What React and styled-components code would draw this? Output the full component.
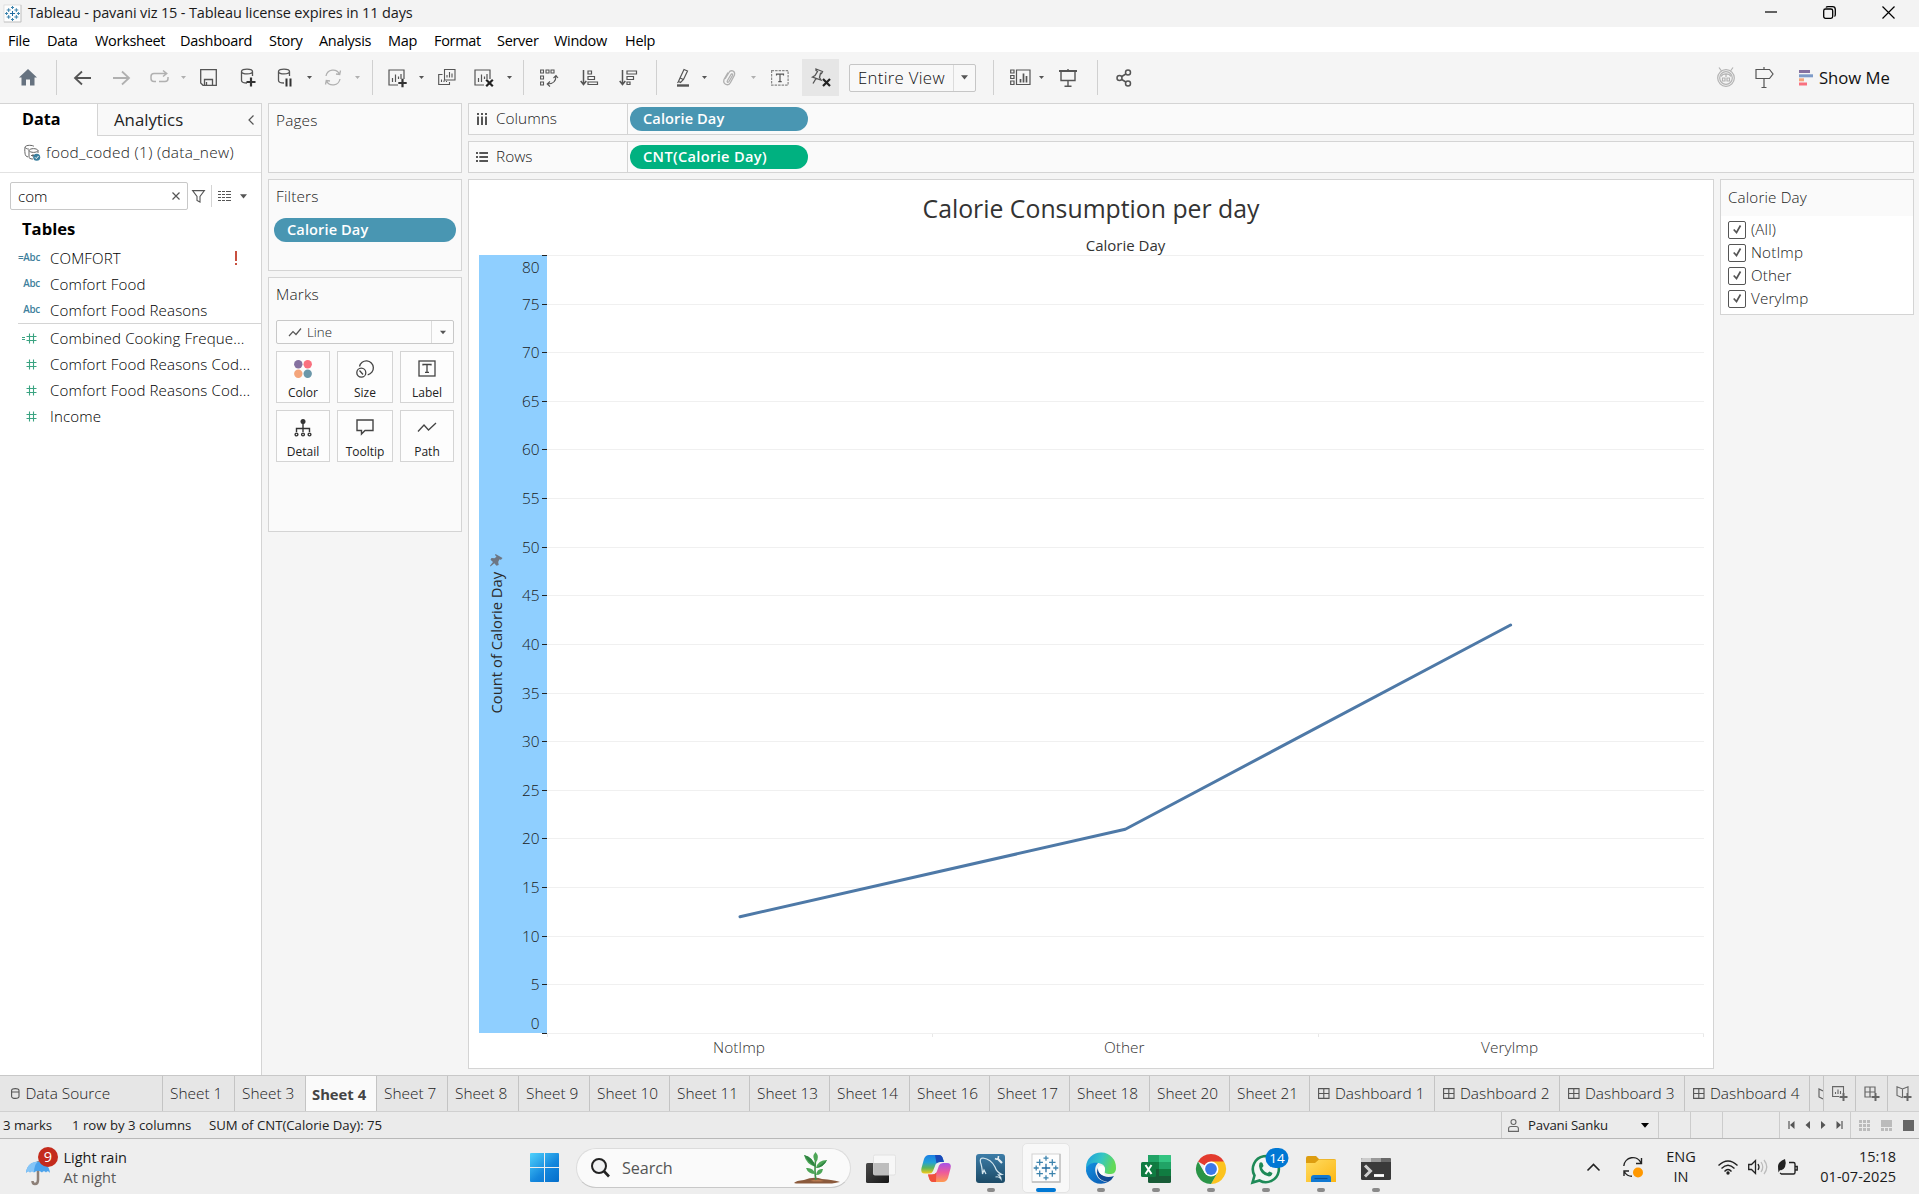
import React from "react";
import styled, { createGlobalStyle } from "styled-components";

const UI = `"Open Sans", "Noto Sans", "Liberation Sans", sans-serif`;

const Global = createGlobalStyle`
  *, *::before, *::after { box-sizing: border-box; }
  html, body { margin: 0; padding: 0; }
  body { font-family: ${UI}; overflow: hidden; background: #f5f5f5; }
  svg { display: block; flex: none; overflow: visible; }
`;

const Window = styled.div`
  width: 1919px;
  height: 1194px;
  display: flex;
  flex-direction: column;
  background: #f5f5f5;
  color: #333;
  font-size: 15px;
  white-space: nowrap;
`;

/* ---------- title bar and menu ---------- */
const TitleBar = styled.header`
  height: 27px;
  display: flex;
  align-items: center;
  padding: 0 24px 0 4px;
  background: #f3f3f3;
  color: #1a1a1a;
  font-size: 14.5px;
  letter-spacing: -0.14px;
  line-height: 26px;
`;
const TitleText = styled.span`
  flex: 1;
  margin-left: 7px;
  padding-bottom: 2px;
`;
const WindowButtons = styled.div`
  display: flex;
  align-items: center;
  gap: 46px;
  padding-bottom: 3px;
`;
const MenuBar = styled.nav`
  height: 25px;
  flex: none;
  display: flex;
  background: #fff;
  color: #000;
  font-size: 14.5px;
  line-height: 27px;
  letter-spacing: -0.3px;
`;
const MenuItem = styled.span`
  width: ${(p) => p.$w}px;
  padding-left: 8px;
`;

/* ---------- toolbar ---------- */
const Toolbar = styled.div`
  height: 51px;
  flex: none;
  display: flex;
  align-items: center;
  padding-right: 29px;
`;
const Tool = styled.span`
  width: ${(p) => p.$w || 24}px;
  height: ${(p) => (p.$active ? 37 : 26)}px;
  flex: none;
  margin-left: ${(p) => p.$ml}px;
  display: flex;
  align-items: center;
  justify-content: center;
  background: ${(p) => (p.$active ? "#e6e6e6" : "transparent")};
`;
const Divider = styled.i`
  width: 1px;
  height: 35px;
  flex: none;
  margin-left: ${(p) => p.$ml}px;
  background: #d0d0d0;
`;
const Spacer = styled.span`
  flex: 1;
`;
const FitBox = styled.div`
  width: 127px;
  height: 28px;
  margin-left: 10px;
  display: flex;
  border: 1px solid #c6c6c6;
  border-radius: 2px;
  background: #f8f8f8;
  color: #111;
  font-size: 16.8px;
  line-height: 26px;
`;
const FitText = styled.span`
  flex: 1;
  padding-left: 8px;
  font-weight: 300;
  letter-spacing: 0.3px;
`;
const DropCell = styled.span`
  width: ${(p) => p.$w}px;
  display: flex;
  align-items: center;
  justify-content: center;
  border-left: 1px solid #dcdcdc;
`;
const ShowMe = styled.span`
  display: flex;
  align-items: center;
  gap: 6px;
  margin-left: 22px;
  color: #111;
  font-size: 16.7px;
  line-height: 24px;
`;

/* ---------- work area ---------- */
const Work = styled.main`
  height: 972px;
  flex: none;
  display: flex;
`;

const DataPane = styled.aside`
  width: 262px;
  flex: none;
  border-top: 1px solid #d4d4d4;
  border-right: 1px solid #d4d4d4;
  background: #fff;
  color: #000;
  font-weight: 300;
`;
const PaneTabs = styled.div`
  display: flex;
  height: 32px;
`;
const DataTab = styled.div`
  width: 97px;
  padding-left: 22px;
  font-size: 16.2px;
  font-weight: 700;
  line-height: 30px;
`;
const AnalyticsTab = styled.div`
  flex: 1;
  display: flex;
  align-items: center;
  justify-content: space-between;
  padding: 0 7px 0 16px;
  border-left: 1px solid #d4d4d4;
  border-bottom: 1px solid #d4d4d4;
  background: #f9f9f9;
  font-size: 16.8px;
  font-weight: 400;
  line-height: 30px;
  color: #1e1e1e;
`;
const SourceRow = styled.div`
  height: 37px;
  display: flex;
  align-items: center;
  gap: 6px;
  padding: 0 0 3px 24px;
  border-bottom: 1px solid #e2e2e2;
  font-size: 15.4px;
  letter-spacing: 0.3px;
  color: #1a1a1a;
`;
const SearchRow = styled.div`
  display: flex;
  align-items: center;
  padding: 9px 0 0 10px;
  height: 37px;
`;
const SearchInput = styled.div`
  width: 178px;
  height: 28px;
  flex: none;
  margin-right: 4px;
  display: flex;
  align-items: center;
  justify-content: space-between;
  padding: 0 7px 1px 7px;
  border: 1px solid #c8c8c8;
  border-radius: 2px;
  font-size: 15.2px;
`;
const ThinLine = styled.i`
  width: 1px;
  height: 22px;
  flex: none;
  margin: 0 6px;
  background: #d4d4d4;
`;
const TablesHead = styled.div`
  height: 35px;
  padding-left: 22px;
  font-size: 16.6px;
  font-weight: 700;
  line-height: 38px;
`;
const FieldRow = styled.div`
  height: 26px;
  display: flex;
  align-items: center;
  font-size: 15.1px;
  letter-spacing: 0.12px;
  line-height: 26px;
`;
const FieldType = styled.span`
  width: 40px;
  height: 26px;
  flex: none;
  margin-right: 10px;
  padding-right: ${(p) => (p.$measure ? 3 : 0)}px;
  display: flex;
  align-items: center;
  justify-content: flex-end;
  color: #3e7f9c;
  font-size: 9.8px;
  font-weight: 600;
  letter-spacing: -0.25px;
`;
const FieldName = styled.span`
  flex: 1;
`;
const Warning = styled.span`
  width: 2px;
  height: 14px;
  margin-right: 24px;
  border-top: 10px solid #c8503f;
  border-bottom: 2px solid #c8503f;
`;
const FieldSplit = styled.hr`
  height: 1px;
  margin: 0 0 1px 18px;
  border: 0;
  background: #d4d4d4;
`;

const Cards = styled.section`
  width: 194px;
  flex: none;
  margin-left: 6px;
  display: flex;
  flex-direction: column;
  gap: 6px;
`;
const Card = styled.div`
  height: ${(p) => p.$h}px;
  border: 1px solid #d4d4d4;
  background: #fafafa;
`;
const CardTitle = styled.div`
  height: 31px;
  padding: 4px 0 0 7px;
  font-size: 15.4px;
  line-height: 26px;
  font-weight: 300;
  letter-spacing: 0.15px;
  color: #1a1a1a;
`;
const Pill = styled.div`
  width: ${(p) => p.$w}px;
  height: 24px;
  margin: ${(p) => p.$m || "0"};
  padding-left: 13px;
  border-radius: 12px;
  background: ${(p) => (p.$green ? "#00b180" : "#4996b2")};
  color: #fff;
  font-size: 14.6px;
  font-weight: 600;
  letter-spacing: ${(p) => (p.$green ? 0.35 : 0.1)}px;
  line-height: 23px;
`;
const MarkSelect = styled.div`
  width: 178px;
  height: 24px;
  margin: 11px 0 7px 7px;
  display: flex;
  align-items: stretch;
  border: 1px solid #c8c8c8;
  border-radius: 2px;
  background: #fcfcfc;
  color: #1a1a1a;
  font-size: 13.3px;
  line-height: 23px;
  font-weight: 300;
`;
const MarkName = styled.span`
  flex: 1;
  display: flex;
  align-items: center;
  gap: 6px;
  padding-left: 12px;
`;
const MarkGrid = styled.div`
  display: grid;
  grid-template-columns: 54px 56px 54px;
  grid-auto-rows: 52px;
  gap: 7px;
  margin-left: 7px;
`;
const MarkButton = styled.div`
  display: flex;
  flex-direction: column;
  align-items: center;
  padding-top: 8px;
  border: 1px solid #d4d4d4;
  background: #fdfdfd;
  color: #222;
  font-size: 12px;
  line-height: 17px;
  gap: 6px;
`;

const Stage = styled.section`
  width: 1446px;
  flex: none;
  margin-left: 6px;
  display: flex;
  flex-direction: column;
  gap: 6px;
`;
const Shelf = styled.div`
  height: 32px;
  flex: none;
  display: flex;
  align-items: center;
  border: 1px solid #d4d4d4;
  background: #fafafa;
`;
const ShelfName = styled.div`
  width: 159px;
  height: 30px;
  display: flex;
  align-items: center;
  gap: 8px;
  padding-left: 7px;
  border-right: 1px solid #d4d4d4;
  font-size: 15.4px;
  line-height: 30px;
  font-weight: 300;
  color: #1a1a1a;
`;
const StageBody = styled.div`
  display: flex;
  align-items: flex-start;
  gap: 6px;
`;
const View = styled.div`
  width: 1246px;
  height: 890px;
  border: 1px solid #d4d4d4;
  background: #fff;
`;
const ViewTitle = styled.h1`
  margin: 0;
  height: 54px;
  font-size: 24.8px;
  font-weight: 400;
  line-height: 56px;
  text-align: center;
  color: #333;
`;
const FieldLabel = styled.div`
  height: 21px;
  padding-left: 69px;
  font-size: 15px;
  line-height: 22px;
  text-align: center;
  color: #333;
`;
const FilterCard = styled.div`
  width: 194px;
  height: 136px;
  border: 1px solid #d4d4d4;
  background: #fff;
  font-size: 15.2px;
  letter-spacing: 0.15px;
  font-weight: 300;
  color: #1a1a1a;
`;
const FilterHead = styled.div`
  height: 36px;
  padding-left: 7px;
  margin-bottom: 2px;
  background: #fafafa;
  line-height: 35px;
`;
const FilterItem = styled.div`
  height: 23px;
  display: flex;
  align-items: center;
  gap: 5px;
  padding-left: 7px;
  line-height: 23px;
`;
const Check = styled.span`
  width: 18px;
  height: 18px;
  display: flex;
  align-items: center;
  justify-content: center;
  border: 1px solid #555;
  border-radius: 2px;
`;

/* ---------- sheet tabs and status ---------- */
const SheetTabs = styled.div`
  height: 37px;
  flex: none;
  display: flex;
  border-top: 1px solid #c8c8c8;
  border-bottom: 1px solid #d0d0d0;
  background: #e6e6e6;
  font-size: 15.4px;
  font-weight: 300;
  color: #222;
`;
const SheetTab = styled.div`
  width: ${(p) => p.$w}px;
  flex: none;
  overflow: hidden;
  display: flex;
  align-items: center;
  gap: ${(p) => p.$gap || 5.5}px;
  justify-content: ${(p) => (p.$center ? "center" : "flex-start")};
  padding-left: ${(p) => (p.$center ? 0 : p.$pl || 7)}px;
  border-left: 1px solid ${(p) => (p.$first ? "transparent" : "#c4c4c4")};
  background: ${(p) => (p.$active ? "#fafafa" : "transparent")};
  font-weight: ${(p) => (p.$active ? 700 : "inherit")};
  font-size: ${(p) => (p.$active ? "14.8px" : "inherit")};
  color: ${(p) => (p.$active ? "#444" : "inherit")};
  line-height: ${(p) => (p.$active ? 34 : 36)}px;
`;
const StatusBar = styled.div`
  height: 27px;
  flex: none;
  display: flex;
  align-items: stretch;
  border-bottom: 1px solid #b8b8b8;
  background: #ebebeb;
  font-size: 13.2px;
  line-height: 27px;
  color: #222;
`;
const StatusText = styled.span`
  width: ${(p) => p.$w}px;
  padding-left: 3px;
`;
const StatusCell = styled.div`
  width: ${(p) => p.$w}px;
  display: flex;
  align-items: center;
  gap: ${(p) => p.$gap || 0}px;
  padding-left: ${(p) => p.$pl || 0}px;
  border-left: 1px solid #ccc;
`;
const UserName = styled.span`
  width: 104px;
  letter-spacing: -0.15px;
`;

/* ---------- taskbar ---------- */
const Taskbar = styled.footer`
  height: 55px;
  flex: none;
  display: flex;
  align-items: center;
  padding-top: 1px;
  background: #eeeeee;
  color: #1a1a1a;
  font-size: 14.5px;
`;
const Weather = styled.div`
  width: 530px;
  height: 54px;
  padding: 1px 0 0 26px;
  display: flex;
  align-items: center;
  gap: 4.5px;
`;
const TwoLines = styled.div`
  width: ${(p) => p.$w || "auto"};
  display: flex;
  flex-direction: column;
  align-items: ${(p) => p.$align || "flex-start"};
  line-height: 20px;
`;
const Muted = styled.span`
  color: #5a5a5a;
`;
const SearchBox = styled.div`
  width: 275px;
  height: 40px;
  margin: 2px 2px 0 17px;
  display: flex;
  align-items: center;
  padding: 0 10px 0 14px;
  border: 1px solid #dcdcdc;
  border-bottom-color: #c8c8c8;
  border-radius: 20px;
  background: #fafafa;
`;
const SearchHint = styled.span`
  flex: 1;
  margin-left: 12px;
  font-size: 16.2px;
  letter-spacing: -0.1px;
  color: #555;
`;
const AppSlot = styled.div`
  width: 55px;
  height: 54px;
  flex: none;
  display: flex;
  justify-content: center;
  padding-top: 3px;
`;
const AppTile = styled.div`
  width: 48px;
  height: 50px;
  display: flex;
  flex-direction: column;
  align-items: center;
  justify-content: space-between;
  padding-top: 10px;
  border-radius: 5px;
  border: 1px solid ${(p) => (p.$active ? "#e4e4e4" : "transparent")};
  background: ${(p) => (p.$active ? "#f8f8f8" : "transparent")};
`;
const RunMark = styled.i`
  width: ${(p) => (p.$active ? 20 : 8)}px;
  height: 4px;
  border-radius: 2px;
  background: ${(p) => (p.$active ? "#0078d4" : "#8a8a8a")};
`;
const Tray = styled.div`
  flex: 1;
  display: flex;
  align-items: center;
  justify-content: flex-end;
  padding-right: 23px;
`;
const TrayItem = styled.div`
  width: ${(p) => p.$w}px;
  display: flex;
  justify-content: center;
`;

/* ---------- drawings ---------- */
const Ic = ({ w = 18, h = w, c = "#555", sw = 1.2, children }) => (
  <svg width={w} height={h} viewBox={`0 0 ${w} ${h}`} fill="none" stroke={c} strokeWidth={sw}>
    {children}
  </svg>
);
const Caret = ({ c = "#555", w = 7 }) => (
  <svg width={w} height="5" viewBox="0 0 8 5"><path d="M0 0H8L4 4.8Z" fill={c} /></svg>
);
const SheetGlyph = () => <path d="M16 10V1H1V16H10M4.500 13V9M7.500 13V5.500M10.500 10V7.500M13 10V5" />;
const Plus = ({ x, y, r = 4 }) => <path d={`M${x - r} ${y}H${x + r}M${x} ${y - r}V${y + r}`} stroke="#333" strokeWidth="2.2" />;
const Cross = ({ x, y, r = 3 }) => <path d={`M${x - r} ${y - r}L${x + r} ${y + r}M${x + r} ${y - r}L${x - r} ${y + r}`} stroke="#222" strokeWidth="2.2" />;

const crosses = [
  [10, 10, 3], [10, 3, 1.8], [10, 17, 1.8], [3, 10, 1.8], [17, 10, 1.8],
  [5.500, 6, 2.300], [14.500, 6, 2.300], [5.500, 14, 2.300], [14.500, 14, 2.300],
];
const TableauMark = ({ size, sw }) => (
  <svg width={size} height={size} viewBox="0 0 20 20">
    <rect x="0" y="0" width="20" height="20" fill="#fdfdfd" stroke="#d2d2d2" strokeWidth=".7" />
    <path d="M20 0V20H0" fill="none" stroke="#bdbdbd" strokeWidth=".9" />
    {crosses.map(([x, y, r], i) => (
      <path key={i} d={`M${x - r} ${y}H${x + r}M${x} ${y - r}V${y + r}`} stroke={i === 0 ? "#1f6aa0" : "#3c83ad"} strokeWidth={sw} />
    ))}
  </svg>
);

const Home = () => <svg width="18" height="17" viewBox="0 0 18 17"><path d="M9 0L18 8.500H15.500V16.500H11V10.500H7V16.500H2.500V8.500H0Z" fill="#66727f" /></svg>;
const Arrow = ({ flip, c }) => <Ic w={17} h={16} c={c} sw={1.8}><path d={flip ? "M0 8H16M9 1.500L16 8L9 14.500" : "M17 8H1M8 1.500L1 8L8 14.500"} /></Ic>;
const Replay = () => <Ic w={19} h={16} c="#b0b0b0" sw={1.5}><path d="M6 11.500H4Q1 11.500 1 8.500V6.500Q1 3.500 4 3.500H16.500M13 .5L16.700 3.500L13 6.500M9 11.500H15Q18 11.500 18 8.500V7" /></Ic>;
const Save = () => <Ic w={17} h={17} sw={1.3}><path d="M.7 .7H16.300V16.300H3L.7 14ZM4.500 16V10.500H12.500V16M6.500 13V16" /></Ic>;
const Cylinder = ({ pause }) => (
  <Ic w={16} h={19} sw={1.3}>
    <path d="M7 15C4 15 1.500 14.500 1.500 12.500V3.500M12.500 3.500V8M1.500 3.500C1.500 .3 12.500 .3 12.500 3.500S1.500 6.700 1.500 3.500" />
    {pause ? <path d="M9.500 10.500V18.500M13.500 10.500V18.500" stroke="#333" strokeWidth="2" /> : <Plus x={11} y={14} r={4.500} />}
  </Ic>
);
const Refresh = () => <Ic w={18} h={17} c="#b0b0b0" sw={1.3}><path d="M2 7A7.200 7.200 0 0 1 15.500 5M16 10A7.200 7.200 0 0 1 2.500 12M16.500 1.500L15.700 5.500L12 5M1.500 15.500L2.300 11.500L6 12" /></Ic>;
const NewSheet = () => <Ic w={19} h={18}><SheetGlyph /><Plus x={14.500} y={14} r={4.200} /></Ic>;
const ClearSheet = () => <Ic w={20} h={18}><SheetGlyph /><Cross x={15.500} y={14} r={3.300} /></Ic>;
const Duplicate = () => <Ic w={18} h={18} sw={1.1}><path d="M6.500 .5H17V11H6.500ZM9 8.500V6M11.500 8.500V3M14 8.500V4.500M4.500 5.500H.7V15.500H11.500V13M3.500 13V10.500M6 13V11.500M8.500 13V12" /></Ic>;
const Swap = () => <Ic w={18} h={18} sw={1.1}><path d="M.6 1H3.500V4H.6ZM6 1H9V4H6ZM11 1H14V4H11ZM.6 7H3.500V10H.6ZM.6 13H3.500V16H.6ZM16 7C16 12 13 15 7.500 15M13.500 9L16 6.500L18 9M10 12.500L7.200 15L10 17.500" /></Ic>;
const Sort = ({ desc }) => (
  <Ic w={18} h={16} sw={1.2}>
    <path d="M3.500 0V14M.7 11L3.500 14.500L6.300 11" strokeWidth="1.5" />
    <path d={desc ? "M8 1H17.500V4H8ZM8 6.500H14.500V9.500H8ZM8 12H11V14.500H8Z" : "M8 1H11.500V4H8ZM8 6.500H14.500V9.500H8ZM8 12H17.500V14.500H8Z"} />
  </Ic>
);
const Highlighter = () => <Ic w={14} h={19}><path d="M4 10L8 1.500L11.500 3L7.500 11.500L4.500 14.500L2.500 13.500ZM4 10L7.500 11.500M1.500 15L2.500 13.500" /><path d="M1 17.500H13" strokeWidth="2.400" /></Ic>;
const Clip = () => <Ic w={14} h={17} c="#b0b0b0" sw={1.3}><path d="M3 10L7 3.500C8.500 .5 13.500 1.500 12.500 6L8.500 13.500C6.500 17.500 .5 15.500 2 10.500L6 3.500M5.500 11.500L9 5.500C10 4 11 5.500 10.500 6.500L7 12.500C6 14 4.500 13 5.500 11.500" /></Ic>;
const TextBox = () => <Ic w={18} h={16} c="#888"><rect x=".6" y=".6" width="16.500" height="14.500" strokeDasharray="2.500 1" /><path d="M5.500 5.500V4.200H12.500V5.500M9 4.200V11.500M7.300 11.700H10.700" stroke="#555" /></Ic>;
const PinX = () => <Ic w={20} h={19} sw={1.3}><path d="M5 1L11.500 3.500L10.500 5.500L9.500 5.300L8.500 9.500L10 12L1.500 9L4 7.500L6.500 3.500L5 2.500ZM5 10.500L2 15.500" /><Cross x={15.500} y={14.500} r={3.500} /></Ic>;
const CardsIcon = () => <Ic w={21} h={17}><path d="M.7 1H4V4H.7ZM.7 6.500H4V9.500H.7ZM.7 12H4V15.500H.7ZM6.500 1H20V15.500H6.500Z" /><path d="M10.500 13.500V10M13.500 13.500V4.500M16.500 13.500V7" strokeWidth="1.7" /></Ic>;
const Present = () => <Ic w={18} h={18} sw={1.4}><path d="M0 2H18" strokeWidth="2" /><path d="M2 2.500V11.500H16V2.500M9 0V2M9 11.500V17M5.500 17.200H12.500" /></Ic>;
const Share = () => <Ic w={16} h={18} sw={1.5}><circle cx="3.500" cy="9" r="2.500" /><circle cx="12" cy="3.500" r="2.500" /><circle cx="12" cy="14.500" r="2.500" /><path d="M5.800 7.500L9.800 5M5.800 10.500L9.800 13" /></Ic>;
const Robot = () => <Ic w={20} h={21} c="#b3b3b3" sw={1.2}><circle cx="10" cy="11" r="8.300" /><circle cx="10" cy="11" r="6.300" /><path d="M3 .5L5.500 4M17 .5L14.500 4M5 9.500C7 6 13 6 15 9.500M6.500 11H9V14H6.500ZM11 11H13.500V14H11ZM10 7V10" /></Ic>;
const Sign = () => <Ic w={19} h={22} sw={1.2}><path d="M1 2.500H14.500L18 7L14.500 11.500H1ZM9 0V2.500M9 11.500V20.500M6.500 20.500H11.500" /></Ic>;

const SourceIcon = () => (
  <Ic w={16} h={16} c="#666" sw={1}>
    <path d="M2 11C.5 10 .7 2 1 2C2 -.3 9 0 10 1.500M1 2.500C2.500 4 4.500 4.200 5 4M5 5.500V12.500C6 14 8 14 9 14M5 5.500C6 3 13 3 14 5.500V8M5 5.500C6 8 13 8 14 5.500M7 10.500H10M8.500 9L10 10.500L8.500 12M2 11L4 12" />
    <circle cx="12.700" cy="12.300" r="3.500" fill="#3b7f9e" stroke="none" />
    <path d="M11 12.300L12.300 13.600L14.500 11" stroke="#fff" />
  </Ic>
);
const Hash = ({ calc }) => <Ic w={calc ? 15 : 11} h={11} c="#3aa381" sw={1.1}><g transform={calc ? "translate(4 0)" : undefined}><path d="M3.500 .5V10.500M7.500 .5V10.500M.5 3.500H10.500M.5 7.500H10.500" /></g>{calc && <path d="M0 4.500H3M0 6.500H3" />}</Ic>;

const marks = {
  Color: <Ic w={18} h={18}><g stroke="none"><circle cx="4.300" cy="4.300" r="4.200" fill="#8571a0" /><circle cx="13.700" cy="4.300" r="4.200" fill="#f9707f" /><circle cx="4.300" cy="13.700" r="4.200" fill="#f4a57b" /><circle cx="13.700" cy="13.700" r="4.200" fill="#6b97a9" /></g></Ic>,
  Size: <Ic w={18} h={18} c="#444" sw={1.3}><circle cx="5.300" cy="12.700" r="4.500" /><path d="M3.500 10.500L7 14.500M3.500 6.500A7 7 0 1 1 11.700 14.800" /></Ic>,
  Label: <Ic w={18} h={18} c="#444" sw={1.3}><rect x="1" y="1" width="16" height="15" /><path d="M5 5.500V4.500H13V5.500M9 4.500V12M7 12.300H11" /></Ic>,
  Detail: <Ic w={18} h={18} c="#333" sw={1.4}><circle cx="9" cy="2.500" r="2.500" fill="#333" stroke="none" /><path d="M9 4V13M2.500 13V9.500H15.500V13" /><circle cx="2.500" cy="15.500" r="1.400" /><circle cx="9" cy="15.500" r="1.400" /><circle cx="15.500" cy="15.500" r="1.400" /></Ic>,
  Tooltip: <Ic w={18} h={18} c="#444" sw={1.4}><path d="M1 1H17V11.500H9L5.500 15V11.500H1Z" /></Ic>,
  Path: <Ic w={18} h={18} c="#444" sw={1.3}><path d="M0 12.500L6 6L10.500 11L18 4" /></Ic>,
};

const GridIcon = () => <Ic w={12} h={11} c="#555" sw={1.1}><path d="M.6 .6H11V10.400H.6ZM5.800 .6V10.400M.6 5.500H11" /></Ic>;
const GridPlus = () => <Ic w={16} h={15} c="#666" sw={1.2}><path d="M11 7V1H1V11H7M6 1V11M1 6H11" /><path d="M7.500 11H15.500M11.500 7V15" strokeWidth="2" /></Ic>;
const SheetPlus = () => <Ic w={16} h={15} c="#666" sw={1.1}><path d="M11.500 7V.6H.6V10.500H7M3.500 8V6M6 8V3.500M8.500 8V5" /><path d="M7.500 11H15.500M11.500 7V15" strokeWidth="2" /></Ic>;
const StoryPlus = () => <Ic w={16} h={15} c="#666" sw={1.1}><path d="M12 7V.8L6.500 3L1 .8V9.500L6.500 11.700M6.500 3V11.700" /><path d="M7.500 11H15.500M11.500 7V15" strokeWidth="2" /></Ic>;

/* ---------- chart ---------- */
const ticks = Array.from({ length: 17 }, (_, i) => 80 - i * 5);
const yOf = (v) => 778.5 - v * 48.63 / 5;
const data = [["NotImp", 12], ["Other", 21], ["VeryImp", 42]];
const xOf = (i) => 271 + i * 385.3;
const labelShift = (v) => (v === 80 ? 11.5 : v === 0 ? -10.5 : 0);

const Chart = () => (
  <svg width="1244" height="812" viewBox="0 0 1244 812" fontFamily={UI} fontSize="15.4">
    <rect x="10" y="0" width="68" height="778" fill="#8fcfff" />
    {ticks.map((v) => {
      const y = Math.floor(yOf(v)) + 0.5;
      return (
        <g key={v}>
          <path d={`M78 ${y}H1235`} stroke="#f0f0f0" />
          <path d={`M73 ${y}H78`} stroke="#222" />
          <text x="70.500" y={y + 5.5 + labelShift(v)} textAnchor="end" fontWeight="300" fill="#1a1a1a">{v}</text>
        </g>
      );
    })}
    {[78.5, 463.500, 849.500, 1234.500].map((x) => <path key={x} d={`M${x} 779V782`} stroke="#e8e8e8" />)}
    <text transform="translate(33 458.500) rotate(-90)" fontSize="14.8" fill="#2a2a2a">Count of Calorie Day</text>
    <path d="M26.500 299L33.500 303L32 304.800L30.300 304.500L29.200 307L29.700 310L27.500 310.800L25.300 308.300L21.500 311.500L21 310.800L24 307L21.500 304.700L22.500 303L25.500 303.200L27.500 301.800L26 300Z" fill="#6d7683" />
    <polyline points={data.map(([, v], i) => `${xOf(i)},${yOf(v)}`).join(" ")} fill="none" stroke="#4e79a7" strokeWidth="3" strokeLinecap="round" strokeLinejoin="round" />
    {data.map(([n], i) => <text key={n} x={xOf(i) - 1} y="797.500" textAnchor="middle" fontWeight="300" fill="#333">{n}</text>)}
  </svg>
);

/* ---------- taskbar logos ---------- */
const WinLogo = () => (
  <svg width="29" height="29" viewBox="0 0 29 29">
    <defs><linearGradient id="win" gradientUnits="userSpaceOnUse" x1="0" y1="0" x2="26" y2="29"><stop offset="0" stopColor="#4fd2fc" /><stop offset=".6" stopColor="#1487dd" /><stop offset="1" stopColor="#0670cc" /></linearGradient></defs>
    <path d="M1 0H14V14H0V1Q0 0 1 0ZM15 0H28Q29 0 29 1V14H15ZM0 15H14V29H1Q0 29 0 28ZM15 15H29V28Q29 29 28 29H15Z" fill="url(#win)" />
  </svg>
);
const Umbrella = () => (
  <svg width="33" height="40" viewBox="0 0 33 40">
    <path d="M12 13V32Q12 36 9 36Q6.500 36 6.500 33" fill="none" stroke="#8d8078" strokeWidth="2.500" />
    <path d="M0 25C1 10 23 10 24 25Q22 22 20 24.500Q18 22 16 24.500Q12 21 8 24.500Q6 22 4 24.500Q2 22 0 25Z" fill="#4ba3ec" />
    <path d="M0 25C1 16 6 14 12 13.500Q8 17 8 24.500Q6 22 4 24.500Q2 22 0 25Z" fill="#85c5f7" />
    <circle cx="22" cy="9" r="10" fill="#c42b1c" />
    <text x="22" y="14" textAnchor="middle" fontSize="14.500" fill="#fff">9</text>
  </svg>
);
const Magnifier = () => <Ic w={19} h={20} c="#222" sw={2}><circle cx="8" cy="8" r="7" fill="#f0f1f2" /><path d="M12.800 13L18 18.500" strokeWidth="2.600" /></Ic>;
const Plant = () => (
  <svg width="46" height="32" viewBox="0 0 46 32">
    <path d="M0 31Q2 28.500 10 28Q20 24 28 27Q40 28 46 30Q40 31 38 31.500H2Z" fill="#8b5a3c" />
    <path d="M16 29Q22 26 30 29Q24 30 16 29Z" fill="#b9794f" />
    <path d="M22 28Q20 20 22 4" stroke="#3f8f48" strokeWidth="1.600" fill="none" />
    <path d="M22 10Q17 5 21.500 0Q26 5 22 10ZM21.500 15Q12 12 10 3Q19 5 21.500 15ZM22 16Q24 8 33 8Q30 15 22 16ZM21.500 22Q14 22 12 16Q19 15 21.500 22ZM22 23Q23 16 29 17Q28 23 22 23Z" fill="#4da657" />
    <path d="M21.500 15Q15 11 10 3Q19 5 21.500 15ZM22 16Q27 13 33 8Q30 15 22 16Z" fill="#2f8442" />
  </svg>
);
const TaskView = () => (
  <svg width="30" height="30" viewBox="0 0 30 30">
    <defs><linearGradient id="tv" x1="0" y1="0" x2="1" y2="1"><stop offset="0" stopColor="#4a4a4a" /><stop offset="1" stopColor="#161616" /></linearGradient></defs>
    <rect x="0" y="9" width="23" height="20" rx="1.500" fill="url(#tv)" />
    <rect x="7.500" y="1" width="22" height="20" rx="1.500" fill="#f7f7f7" stroke="#ddd" strokeWidth=".8" />
    <path d="M7.500 9H23V21H9Q7.500 21 7.500 19.500Z" fill="#bdbdbd" />
  </svg>
);
const Copilot = () => (
  <svg width="30" height="30" viewBox="0 0 30 30">
    <defs>
      <linearGradient id="cpa" x1="0" y1="0" x2="0" y2="1"><stop offset="0" stopColor="#1b7fe4" /><stop offset=".4" stopColor="#22a0d8" /><stop offset=".7" stopColor="#5db65b" /><stop offset="1" stopColor="#f6c916" /></linearGradient>
      <linearGradient id="cpb" x1="0" y1="0" x2="0" y2="1"><stop offset="0" stopColor="#a650e8" /><stop offset=".5" stopColor="#ee5a9a" /><stop offset="1" stopColor="#ff9b50" /></linearGradient>
    </defs>
    <path d="M8 1H18Q21 1 22 5L23 8H19Q15 8 14 12L12 17Q11 19.500 8 19.500H4Q-1 19.500 .5 14L3 5Q4.500 1 8 1Z" fill="url(#cpa)" />
    <path d="M14 1H18Q21 1 22 5L23 8H19Q16.500 8 15.500 9.500Z" fill="#1a49b8" />
    <path d="M22 28H12Q9 28 8 24L7 20.500H11Q15 20.500 16 17L18 11.500Q19 9 22 9H26Q31 9 29.500 14.500L27 24Q25.500 28 22 28Z" fill="url(#cpb)" />
    <path d="M15 28H12Q9 28 8 24L7 20.500H11Q14 20.500 15.300 18.500Z" fill="#f0503c" />
  </svg>
);
const MySql = () => (
  <svg width="29" height="30" viewBox="0 0 29 30">
    <defs><linearGradient id="my" x1="0" y1="0" x2="0" y2="1"><stop offset="0" stopColor="#3d7da8" /><stop offset="1" stopColor="#1c4a66" /></linearGradient></defs>
    <rect width="29" height="29" rx="3" fill="url(#my)" />
    <path d="M10 20L8 16L6.500 20Q6 12 4.500 8.500Q3.500 4 7 4Q15 5 19 13Q20.500 18 26 20.500L22.500 21Q25 23 25 25Q23 22 19.500 23" fill="none" stroke="#d5e6ee" strokeWidth="1.200" />
    <path d="M21.500 4.500L26 9" stroke="#e6eef2" strokeWidth="2.200" /><path d="M19 4.500Q22.500 6.500 22.500 2" stroke="#e6eef2" strokeWidth="1.600" fill="none" />
  </svg>
);
const Edge = () => (
  <svg width="30" height="30" viewBox="0 0 30 30">
    <defs>
      <linearGradient id="eg" x1="0" y1="0" x2="1" y2=".3"><stop offset="0" stopColor="#1a9be0" /><stop offset=".55" stopColor="#35c6c4" /><stop offset="1" stopColor="#62d957" /></linearGradient>
      <linearGradient id="eb" x1="0" y1="0" x2="1" y2="1"><stop offset="0" stopColor="#1390e0" /><stop offset="1" stopColor="#0b58b0" /></linearGradient>
    </defs>
    <path d="M0 13A15 15 0 0 1 30 14C30 19 27 20 24 20C20 20 18 19 19 17C20 11 15 9 11 9C6 9 1 11 0 17Z" fill="url(#eg)" />
    <path d="M0 17C0 10 7 8 12 9C9 12 8 17 11 22C13 26 18 28 22 28A15 15 0 0 1 0 17Z" fill="url(#eb)" />
    <path d="M12 14C9 20 13 27 22 28Q26 26 28 22Q22 24 18 22Q12 20 12 14Z" fill="#104a94" />
    <path d="M12 15Q13 11 17 12Q20 14 18.500 17.500Q17 20 20 22Q13 21 12 15Z" fill="#fff" />
  </svg>
);
const Excel = () => (
  <svg width="30" height="30" viewBox="0 0 30 30">
    <rect x="7" y="1" width="23" height="28" rx="1.500" fill="#185c37" />
    <path d="M7 1H18V8H7Z" fill="#21a366" /><path d="M18 1H29Q30 1 30 2V8H18Z" fill="#33c481" />
    <path d="M7 8H18V15H7Z" fill="#107c41" /><path d="M18 8H30V15H18Z" fill="#21a366" /><path d="M18 15H30V22H18Z" fill="#107c41" />
    <rect x="0" y="8" width="15" height="15" rx="1.500" fill="#0f7b41" />
    <path d="M4.500 11L10.500 20M10.500 11L4.500 20" stroke="#fff" strokeWidth="2" />
  </svg>
);
const Chrome = () => (
  <svg width="30" height="30" viewBox="0 0 30 30">
    <path d="M15 15L2 7.500A15 15 0 0 1 28 7.500Z" fill="#e33b2e" />
    <path d="M15 7.500H28A15 15 0 0 1 15 30L21.500 18.700Z" fill="#fcc31e" />
    <path d="M2 7.500L8.500 18.700Q15 24 21.500 18.700L15 30A15 15 0 0 1 2 7.500Z" fill="#2a9447" />
    <circle cx="15" cy="15" r="7.500" fill="#fff" /><circle cx="15" cy="15" r="5.900" fill="#3b78e7" />
  </svg>
);
const WhatsApp = () => (
  <svg width="30" height="30" viewBox="0 0 30 30">
    <path d="M1.500 28.500L3.500 21.500A13 13 0 1 1 8.500 26.500Z" fill="#f3f6f4" stroke="#1e8a57" strokeWidth="2.600" />
    <path d="M8.500 9Q10 7.500 11.500 9L12.500 12L11 14Q13 18 16.500 19L18.500 17.500L21.500 19Q21 22.500 18 22.500Q9 21 8 12Z" fill="#1e8a57" />
    <rect x="14.500" y="-6" width="23" height="20" rx="10" fill="#0078d4" />
    <text x="26" y="9" textAnchor="middle" fontSize="13.500" fill="#fff">14</text>
  </svg>
);
const Folder = () => (
  <svg width="30" height="30" viewBox="0 0 30 30">
    <defs><linearGradient id="fo" x1="0" y1="0" x2="1" y2="1"><stop offset="0" stopColor="#ffdc62" /><stop offset="1" stopColor="#fcb714" /></linearGradient></defs>
    <path d="M0 4Q0 2 2 2H10L13 5H28Q30 5 30 7V12H0Z" fill="#dd9d10" />
    <path d="M0 9H9L13 5.500H29Q30 5.500 30 7V28H0Z" fill="url(#fo)" />
    <path d="M5 28V24Q5 21 8 21H22Q25 21 25 24V28Z" fill="#1079d2" /><path d="M8.500 24.500H21.500" stroke="#0b4f92" strokeWidth="1.200" />
  </svg>
);
const Terminal = () => (
  <svg width="30" height="30" viewBox="0 0 30 30">
    <rect x="0" y="4" width="30" height="22" rx="1.500" fill="#3a3a3a" />
    <path d="M0 8V5.500Q0 4 1.500 4H10V8Z" fill="#ccc" /><path d="M10 4H20V8H10Z" fill="#999" /><path d="M20 4H28.500Q30 4 30 5.500V8H20Z" fill="#686868" />
    <path d="M4 11.500L9.500 17L4 22.500" stroke="#d0d0d0" strokeWidth="3" fill="none" /><path d="M13 21.500H23" stroke="#fff" strokeWidth="2.800" />
  </svg>
);
const TableauApp = () => <TableauMark size={28} sw={0.9} />;

const apps = [
  [TaskView], [Copilot], [MySql, true], [TableauApp, true, true],
  [Edge, true], [Excel, true], [Chrome, true], [WhatsApp, true], [Folder, true], [Terminal, true],
];

const menu = [["File", 39], ["Data", 48], ["Worksheet", 85], ["Dashboard", 89], ["Story", 50], ["Analysis", 69], ["Map", 46], ["Format", 63], ["Server", 57], ["Window", 71], ["Help", 60]];
const fields = [["=Abc", "COMFORT", true], ["Abc", "Comfort Food"], ["Abc", "Comfort Food Reasons"]];
const measures = [["Combined Cooking Freque...", true], ["Comfort Food Reasons Cod..."], ["Comfort Food Reasons Cod..."], ["Income"]];
const sheets = [[1, 72], [3, 71], [4, 71], [7, 71], [8, 71], [9, 71], [10, 80], [11, 80], [13, 80], [14, 80], [16, 80], [17, 80], [18, 80], [20, 80], [21, 80]];

export default function App() {
  return (
    <>
      <Global />
      <Window>
        <TitleBar>
          <TableauMark size={17} sw={1.2} />
          <TitleText>Tableau - pavani viz 15 - Tableau license expires in 11 days</TitleText>
          <WindowButtons>
            <Ic w={12} h={12} c="#000"><path d="M0 6H12" /></Ic>
            <Ic w={13} h={13} c="#000" sw={1.3}><rect x=".7" y="3" width="9" height="9.300" rx="1.800" /><path d="M3 1.500Q3.500 .7 5 .7H9.500Q12.300 .7 12.300 3.500V8.500Q12.300 10 11.500 10.500" /></Ic>
            <Ic w={13} h={13} c="#000"><path d="M.5 .5L12.500 12.500M12.500 .5L.5 12.500" /></Ic>
          </WindowButtons>
        </TitleBar>
        <MenuBar>{menu.map(([t, w]) => <MenuItem key={t} $w={w}>{t}</MenuItem>)}</MenuBar>

        <Toolbar>
          <Tool $ml={16}><Home /></Tool>
          <Divider $ml={16} />
          <Tool $ml={13}><Arrow c="#555" /></Tool>
          <Tool $ml={15}><Arrow flip c="#b0b0b0" /></Tool>
          <Tool $ml={14}><Replay /></Tool>
          <Tool $ml={8} $w={8}><Caret c="#b0b0b0" w={5} /></Tool>
          <Tool $ml={9}><Save /></Tool>
          <Tool $ml={16}><Cylinder /></Tool>
          <Tool $ml={13}><Cylinder pause /></Tool>
          <Tool $ml={8} $w={8}><Caret w={5} /></Tool>
          <Tool $ml={8}><Refresh /></Tool>
          <Tool $ml={8} $w={8}><Caret c="#b0b0b0" w={5} /></Tool>
          <Divider $ml={11} />
          <Tool $ml={12}><NewSheet /></Tool>
          <Tool $ml={8} $w={8}><Caret w={5} /></Tool>
          <Tool $ml={10}><Duplicate /></Tool>
          <Tool $ml={13}><ClearSheet /></Tool>
          <Tool $ml={9} $w={8}><Caret w={5} /></Tool>
          <Divider $ml={10} />
          <Tool $ml={13}><Swap /></Tool>
          <Tool $ml={16}><Sort /></Tool>
          <Tool $ml={15}><Sort desc /></Tool>
          <Divider $ml={16} />
          <Tool $ml={14}><Highlighter /></Tool>
          <Tool $ml={5} $w={8}><Caret w={5} /></Tool>
          <Tool $ml={9}><Clip /></Tool>
          <Tool $ml={8} $w={8}><Caret c="#b0b0b0" w={5} /></Tool>
          <Tool $ml={11}><TextBox /></Tool>
          <Tool $ml={10} $w={37} $active><PinX /></Tool>
          <FitBox><FitText>Entire View</FitText><DropCell $w={22}><Caret w={7} /></DropCell></FitBox>
          <Divider $ml={17} />
          <Tool $ml={14}><CardsIcon /></Tool>
          <Tool $ml={5} $w={8}><Caret w={5} /></Tool>
          <Tool $ml={11}><Present /></Tool>
          <Divider $ml={17} />
          <Tool $ml={14}><Share /></Tool>
          <Spacer />
          <Tool $ml={0}><Robot /></Tool>
          <Tool $ml={15}><Sign /></Tool>
          <ShowMe>
            <svg width="14" height="16" viewBox="0 0 14 16"><path d="M0 0H11V3H0Z" fill="#8571a0" /><path d="M0 4.300H14V7.300H0Z" fill="#7e9bc8" /><path d="M0 8.300H5V11.300H0Z" fill="#f4a57b" /><path d="M0 12.500H8V15.500H0Z" fill="#f9707f" /></svg>
            Show Me
          </ShowMe>
        </Toolbar>

        <Work>
          <DataPane>
            <PaneTabs>
              <DataTab>Data</DataTab>
              <AnalyticsTab>Analytics<Ic w={6} h={10}><path d="M5.500 .5L1 5L5.500 9.500" /></Ic></AnalyticsTab>
            </PaneTabs>
            <SourceRow><SourceIcon />food_coded (1) (data_new)</SourceRow>
            <SearchRow>
              <SearchInput>com<Ic w={8} h={8}><path d="M.5 .5L7.500 7.500M7.500 .5L.5 7.500" /></Ic></SearchInput>
              <Ic w={13} h={13} sw={1.1}><path d="M.6 .6H12.400L8 6.500V12L5 10.500V6.500Z" /></Ic>
              <ThinLine />
              <Ic w={13} h={10} sw={1.1}><path d="M0 .5H3M4 .5H7M8 .5H13M0 3.500H3M4 3.500H7M8 3.500H13M0 6.500H3M4 6.500H7M8 6.500H13M0 9.500H3M4 9.500H7M8 9.500H13" /></Ic>
              <Tool $ml={8} $w={8}><Caret w={7} /></Tool>
            </SearchRow>
            <TablesHead>Tables</TablesHead>
            {fields.map(([t, n, bad]) => (
              <FieldRow key={n}><FieldType>{t}</FieldType><FieldName>{n}</FieldName>{bad && <Warning />}</FieldRow>
            ))}
            <FieldSplit />
            {measures.map(([n, calc], i) => (
              <FieldRow key={i}><FieldType $measure><Hash calc={calc} /></FieldType><FieldName>{n}</FieldName></FieldRow>
            ))}
          </DataPane>

          <Cards>
            <Card $h={70}><CardTitle>Pages</CardTitle></Card>
            <Card $h={92}><CardTitle>Filters</CardTitle><Pill $w={182} $m="7px 0 0 5px">Calorie Day</Pill></Card>
            <Card $h={255}>
              <CardTitle>Marks</CardTitle>
              <MarkSelect>
                <MarkName><Ic w={12} h={9}><path d="M0 8L4 3.500L7 6.500L12 .5" /></Ic>Line</MarkName>
                <DropCell $w={22}><Caret w={6} /></DropCell>
              </MarkSelect>
              <MarkGrid>{Object.keys(marks).map((n) => <MarkButton key={n}>{marks[n]}<span>{n}</span></MarkButton>)}</MarkGrid>
            </Card>
          </Cards>

          <Stage>
            <Shelf>
              <ShelfName><Ic w={12} h={12} sw={2}><path d="M2 0V2M6 0V2M10 0V2M2 3.500V12M6 3.500V12M10 3.500V12" /></Ic>Columns</ShelfName>
              <Pill $w={178} $m="0 0 0 2px">Calorie Day</Pill>
            </Shelf>
            <Shelf>
              <ShelfName><Ic w={12} h={10} sw={2}><path d="M0 1H2M3.300 1H12M0 5H2M3.300 5H12M0 9H2M3.300 9H12" /></Ic>Rows</ShelfName>
              <Pill $w={178} $m="0 0 0 2px" $green>CNT(Calorie Day)</Pill>
            </Shelf>
            <StageBody>
              <View>
                <ViewTitle>Calorie Consumption per day</ViewTitle>
                <FieldLabel>Calorie Day</FieldLabel>
                <Chart />
              </View>
              <FilterCard>
                <FilterHead>Calorie Day</FilterHead>
                {["(All)", "NotImp", "Other", "VeryImp"].map((n) => (
                  <FilterItem key={n}><Check><Ic w={9} h={9} sw={1.7}><path d="M.7 4.500L3.500 7.500L7.500 .5" /></Ic></Check>{n}</FilterItem>
                ))}
              </FilterCard>
            </StageBody>
          </Stage>
        </Work>

        <SheetTabs>
          <SheetTab $w={162} $first $pl={10}><Ic w={9} h={11} sw={1.1}><path d="M.6 2.500C.6 0 8 0 8 2.500V8.500C8 11 .6 11 .6 8.500ZM.6 4H8" /></Ic>Data Source</SheetTab>
          {sheets.map(([n, w]) => <SheetTab key={n} $w={w} $active={n === 4} $pl={n === 4 ? 6 : 7}>Sheet {n}</SheetTab>)}
          {[1, 2, 3, 4].map((n) => <SheetTab key={n} $w={125} $pl={8} $gap={5}><GridIcon />Dashboard {n}</SheetTab>)}
          <SheetTab $w={14} $pl={8}><Ic w={12} h={12} c="#666"><path d="M5 3L1 1V9L5 11M5 3L10 1" /></Ic></SheetTab>
          <SheetTab $w={32} $center><SheetPlus /></SheetTab>
          <SheetTab $w={32} $center><GridPlus /></SheetTab>
          <SheetTab $w={32} $center><StoryPlus /></SheetTab>
        </SheetTabs>
        <StatusBar>
          <StatusText $w={69}>3 marks</StatusText>
          <StatusText $w={137}>1 row by 3 columns</StatusText>
          <StatusText $w={200}>SUM of CNT(Calorie Day): 75</StatusText>
          <Spacer />
          <StatusCell $w={157} $pl={6} $gap={9}>
            <Ic w={11} h={13} c="#666" sw={1.1}><circle cx="5.500" cy="3" r="2.500" /><path d="M.6 12.400V9.500Q.6 7.500 3 7.500H8Q10.400 7.500 10.400 9.500V12.400Z" /></Ic>
            <UserName>Pavani Sanku</UserName>
            <Caret c="#000" w={8} />
          </StatusCell>
          <StatusCell $w={32} /><StatusCell $w={32} /><StatusCell $w={57} />
          <StatusCell $w={71} $pl={8} $gap={9.5}>
            <Ic w={7} h={8}><path d="M1 0V8" /><path d="M6.500 0V8L2 4Z" fill="#555" stroke="none" /></Ic>
            <Ic w={6} h={8}><path d="M5 0V8L.5 4Z" fill="#555" stroke="none" /></Ic>
            <Ic w={6} h={8}><path d="M1 0V8L5.500 4Z" fill="#555" stroke="none" /></Ic>
            <Ic w={7} h={8}><path d="M6 0V8" /><path d="M.5 0V8L5 4Z" fill="#555" stroke="none" /></Ic>
          </StatusCell>
          <StatusCell $w={69} $pl={8} $gap={11}>
            <Ic w={11} h={11} c="#bbb" sw={3}><path d="M0 1.500H11M0 5.500H11M0 9.500H11" strokeDasharray="3 1" /></Ic>
            <Ic w={11} h={11} c="#bbb" sw={3}><path d="M0 0H11V7H0Z" fill="#bbb" stroke="none" /><path d="M0 9.500H11" strokeDasharray="3 1" /></Ic>
            <Ic w={11} h={11}><path d="M0 0H11V11H0Z" fill="#666" stroke="none" /></Ic>
          </StatusCell>
        </StatusBar>

        <Taskbar>
          <Weather><Umbrella /><TwoLines><span>Light rain</span><Muted>At night</Muted></TwoLines></Weather>
          <WinLogo />
          <SearchBox><Magnifier /><SearchHint>Search</SearchHint><Plant /></SearchBox>
          {apps.map(([Logo, run, active], i) => (
            <AppSlot key={i}><AppTile $active={active}><Logo />{run && <RunMark $active={active} />}</AppTile></AppSlot>
          ))}
          <Tray>
            <TrayItem $w={30}><Ic w={13} h={9} c="#222" sw={1.6}><path d="M.5 7.500L6.500 1.500L12.500 7.500" /></Ic></TrayItem>
            <TrayItem $w={50}>
              <Ic w={20} h={20} c="#222" sw={1.4}><path d="M.8 9A9 9 0 0 1 18 6M18.500 1V6.500H13M1 19V14H6M1.500 15A9 9 0 0 0 9 19.300" /><circle cx="15" cy="15.500" r="5" fill="#ff9800" stroke="none" /></Ic>
            </TrayItem>
            <TrayItem $w={46}><TwoLines $align="center"><span>ENG</span><span>IN</span></TwoLines></TrayItem>
            <TrayItem $w={48}><Ic w={20} h={15} c="#222" sw={1.4}><path d="M.5 5.500Q10 -3.500 19.500 5.500M3.500 8.500Q10 2 16.500 8.500M6.500 11.500Q10 7.500 13.500 11.500" /><circle cx="10" cy="13" r="1.700" fill="#222" stroke="none" /></Ic></TrayItem>
            <TrayItem $w={12}><Ic w={20} h={16} c="#222" sw={1.3}><path d="M.7 5.500H3.500L7.500 1.500V14.500L3.500 10.500H.7ZM10 5Q12 8 10 11" /><path d="M13 3Q16.500 8 13 13M16 1Q21.500 8 16 15" stroke="#bbb" /></Ic></TrayItem>
            <TrayItem $w={48}><Ic w={20} h={17} c="#222" sw={1.4}><path d="M11 3.500H15.500Q17 3.500 17 5V13.500Q17 15 15.500 15H3.500L2 14M17.500 7.500H19.200V11H17.500" /><path d="M0 7Q0 3 7 0Q8.500 4 7 8Q5 12 2 11L.5 13.500Q0 10 0 7Z" fill="#222" stroke="none" /></Ic></TrayItem>
            <TwoLines $align="flex-end" $w="84px"><span>15:18</span><span>01-07-2025</span></TwoLines>
          </Tray>
        </Taskbar>
      </Window>
    </>
  );
}
